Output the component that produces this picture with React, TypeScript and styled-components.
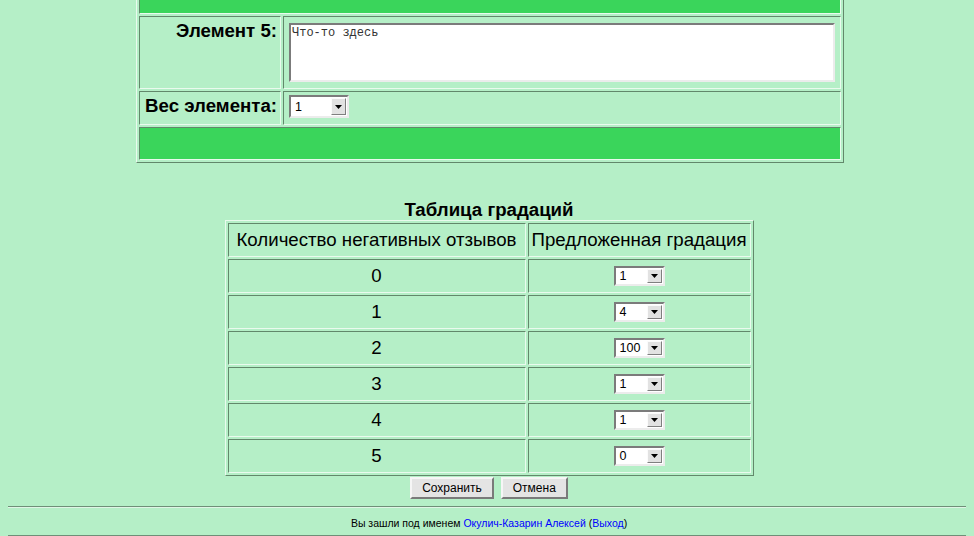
import React from "react";
import styled, { createGlobalStyle } from "styled-components";

const BG = "#b5efc7";
const GREEN = "#3ad55b";
const DARK = "#62886b";
const LIGHT = "#eafaee";
const MAIN_FONT = `"Liberation Sans", Arial, sans-serif`;

const GlobalStyle = createGlobalStyle`
  html, body {
    margin: 0;
    padding: 0;
    background: ${BG};
    overflow: hidden;
  }
  body {
    margin: 0 8px;
    font-family: ${MAIN_FONT};
    color: #000;
  }
`;

const Page = styled.div`
  width: 962px;
  display: flex;
  flex-direction: column;
`;

const FormTable = styled.table`
  align-self: flex-start;
  border-collapse: separate;
  border-spacing: 2px;
  border: 1px solid;
  border-color: ${LIGHT} ${DARK} ${DARK} ${LIGHT};
  margin: -22px 0 0 128px;
  width: 708px;
`;

const InsetCell = styled.td`
  border: 1px solid;
  border-color: ${DARK} ${LIGHT} ${LIGHT} ${DARK};
  box-sizing: border-box;
`;

const BarCell = styled(InsetCell)`
  background: ${GREEN};
  height: 33px;
  padding: 0;
`;

const LabelCell = styled(InsetCell)`
  width: 144px;
  padding: 3px 3px 3px 4px;
  text-align: right;
  vertical-align: top;
  font-weight: bold;
  font-size: 18.67px;
  line-height: 21.5px;
  white-space: nowrap;
`;

const ValueCell = styled(InsetCell)`
  padding: 3px 5px;
  vertical-align: top;
`;

const TextArea = styled.textarea`
  display: block;
  width: 546px;
  height: 59px;
  margin: 3px 0;
  box-sizing: border-box;
  border: 2px solid;
  border-color: #7b7b7b #ececec #ececec #7b7b7b;
  background: #fff;
  padding: 1px 1px;
  font-family: "Liberation Mono", "Courier New", monospace;
  font-size: 12px;
  color: #333;
  resize: none;
  outline: none;
`;

const SelectBox = styled.div<{ $w: number; $h: number; $mb?: number }>`
  display: flex;
  align-items: stretch;
  width: ${(p) => p.$w}px;
  height: ${(p) => p.$h}px;
  margin-bottom: ${(p) => p.$mb ?? 0}px;
  box-sizing: border-box;
  border: 2px solid;
  border-color: #7b7b7b #ececec #ececec #7b7b7b;
  background: #fff;
  font-family: ${MAIN_FONT};
  font-size: 12.5px;
  line-height: 14px;
  text-align: left;
`;

const SelectText = styled.span`
  flex: 1;
  display: flex;
  align-items: center;
  padding-left: 4px;
`;

const SelectArrow = styled.span`
  width: 15px;
  margin: 1px;
  box-sizing: border-box;
  background: #e2e2e2;
  border: 1px solid;
  border-color: #fbfbfb #7f7f7f #7f7f7f #fbfbfb;
  display: flex;
  align-items: center;
  justify-content: center;
`;

const CenterWrap = styled.div`
  display: flex;
  justify-content: center;
`;

function OldSelect({ value, w, h, mb }: { value: string; w: number; h: number; mb?: number }) {
  return (
    <SelectBox $w={w} $h={h} $mb={mb}>
      <SelectText>{value}</SelectText>
      <SelectArrow>
        <svg width="7" height="4" viewBox="0 0 7 4">
          <polygon points="0,0 7,0 3.5,4" fill="#000" />
        </svg>
      </SelectArrow>
    </SelectBox>
  );
}

const GradTable = styled.table`
  align-self: center;
  table-layout: fixed;
  width: 529px;
  border-collapse: separate;
  border-spacing: 2px;
  border: 1px solid;
  border-color: ${LIGHT} ${DARK} ${DARK} ${LIGHT};
  margin-top: 36px;
`;

const Caption = styled.caption`
  font-weight: bold;
  font-size: 18.67px;
  line-height: 21px;
`;

const GradCell = styled(InsetCell)`
  height: 34px;
  padding: 0 3px;
  text-align: center;
  vertical-align: middle;
  font-size: 18.67px;
  line-height: 21.5px;
  white-space: nowrap;
  overflow: visible;
`;

const ButtonRow = styled.div`
  display: flex;
  justify-content: center;
  gap: 7px;
  margin-top: 1px;
`;

const Button = styled.button`
  height: 22px;
  padding: 0 10px;
  box-sizing: border-box;
  background: #e4e4e4;
  border: 2px solid;
  border-color: #f6f6f6 #7a7a7a #7a7a7a #f6f6f6;
  font-family: ${MAIN_FONT};
  font-size: 12px;
  color: #000;
`;

const Rule = styled.div<{ $mt: number }>`
  margin-top: ${(p) => p.$mt}px;
  border-top: 1px solid #6f8f78;
  border-bottom: 1px solid #dff5e5;
`;

const Footer = styled.div`
  margin-top: 9px;
  text-align: center;
  font-size: 10.5px;
  line-height: 13px;
`;

const Link = styled.a`
  color: #0000ff;
  text-decoration: none;
`;

const grades: [string, string][] = [
  ["0", "1"],
  ["1", "4"],
  ["2", "100"],
  ["3", "1"],
  ["4", "1"],
  ["5", "0"],
];

export default function App() {
  return (
    <>
      <GlobalStyle />
      <Page>
        <FormTable>
          <tbody>
            <tr>
              <BarCell colSpan={2} />
            </tr>
            <tr>
              <LabelCell>Элемент 5:</LabelCell>
              <ValueCell>
                <TextArea defaultValue="Что-то здесь" />
              </ValueCell>
            </tr>
            <tr>
              <LabelCell>Вес элемента:</LabelCell>
              <ValueCell>
                <OldSelect value="1" w={60} h={23} mb={3} />
              </ValueCell>
            </tr>
            <tr>
              <BarCell colSpan={2} />
            </tr>
          </tbody>
        </FormTable>

        <GradTable>
          <Caption>Таблица градаций</Caption>
          <colgroup>
            <col style={{ width: 298 }} />
            <col style={{ width: 223 }} />
          </colgroup>
          <tbody>
            <tr>
              <GradCell>Количество негативных отзывов</GradCell>
              <GradCell>Предложенная градация</GradCell>
            </tr>
            {grades.map(([n, g]) => (
              <tr key={n}>
                <GradCell>{n}</GradCell>
                <GradCell>
                  <CenterWrap>
                    <OldSelect value={g} w={51} h={20} />
                  </CenterWrap>
                </GradCell>
              </tr>
            ))}
          </tbody>
        </GradTable>

        <ButtonRow>
          <Button>Сохранить</Button>
          <Button>Отмена</Button>
        </ButtonRow>

        <Rule $mt={7} />
        <Footer>
          Вы зашли под именем <Link href="#">Окулич-Казарин Алексей</Link> (<Link href="#">Выход</Link>)
        </Footer>
        <Rule $mt={5} />
      </Page>
    </>
  );
}
